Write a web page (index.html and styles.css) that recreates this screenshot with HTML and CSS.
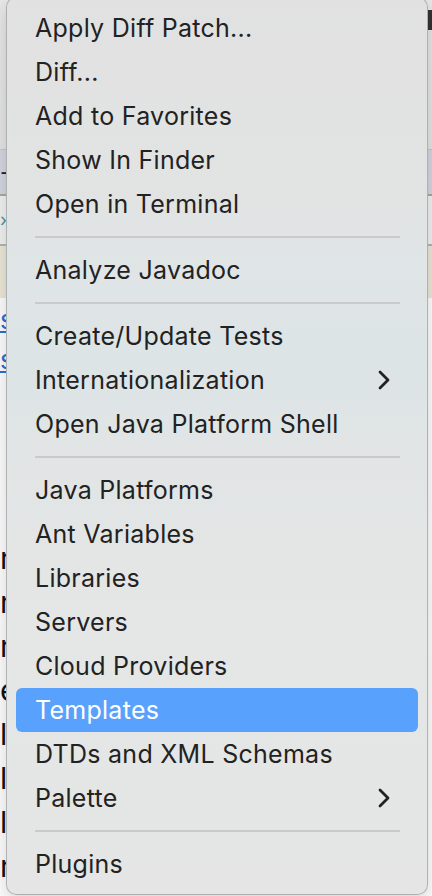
FILE: index.html
```html
<!DOCTYPE html>
<html lang="en">
<head>
<meta charset="utf-8">
<title>Context menu</title>
<link rel="stylesheet" href="styles.css">
</head>
<body>
<div class="backdrop">
  <div class="band band-top"><span class="tab-mark"></span></div>
  <div class="band band-dark"><span class="glyph">-</span></div>
  <div class="band band-light"><span class="teal">›</span></div>
  <div class="band band-beige"></div>
  <div class="band band-links">
    <div class="link">s</div>
    <div class="link">s</div>
  </div>
  <div class="band band-code">
    <div class="code">r</div>
    <div class="code">m</div>
    <div class="code">r</div>
    <div class="code">e</div>
    <div class="code">l</div>
    <div class="code">l</div>
    <div class="code">l</div>
    <div class="code">r</div>
  </div>
</div>

<div class="menu" role="menu">
  <div class="item">Apply Diff Patch...</div>
  <div class="item">Diff...</div>
  <div class="item">Add to Favorites</div>
  <div class="item">Show In Finder</div>
  <div class="item">Open in Terminal</div>
  <div class="sep"></div>
  <div class="item">Analyze Javadoc</div>
  <div class="sep"></div>
  <div class="item">Create/Update Tests</div>
  <div class="item">Internationalization
    <svg class="chev" viewBox="0 0 12 20" width="12" height="20"><path d="M2 2 L10 10 L2 18" fill="none" stroke="currentColor" stroke-width="2.8" stroke-linecap="round" stroke-linejoin="round"/></svg>
  </div>
  <div class="item">Open Java Platform Shell</div>
  <div class="sep"></div>
  <div class="item">Java Platforms</div>
  <div class="item">Ant Variables</div>
  <div class="item">Libraries</div>
  <div class="item">Servers</div>
  <div class="item">Cloud Providers</div>
  <div class="item active">Templates</div>
  <div class="item">DTDs and XML Schemas</div>
  <div class="item">Palette
    <svg class="chev" viewBox="0 0 12 20" width="12" height="20"><path d="M2 2 L10 10 L2 18" fill="none" stroke="currentColor" stroke-width="2.8" stroke-linecap="round" stroke-linejoin="round"/></svg>
  </div>
  <div class="sep"></div>
  <div class="item">Plugins</div>
</div>
</body>
</html>
```

FILE: styles.css
```css
html, body {
  margin: 0;
  padding: 0;
}
body {
  width: 432px;
  height: 896px;
  overflow: hidden;
  position: relative;
  background: #ffffff;
  font-family: Inter, "Noto Sans", sans-serif;
}

/* backdrop (window content behind the menu) */
.backdrop {
  display: flex;
  flex-direction: column;
  height: 896px;
  overflow: hidden;
}
.band {
  width: 100%;
  box-sizing: border-box;
  flex-shrink: 0;
}
.band-top {
  height: 150px;
  background: linear-gradient(#e9e9e9, #e6e6e6);
  border-bottom: 1px solid #c9c9c9;
  display: flex;
  justify-content: flex-end;
  align-items: flex-start;
}
.tab-mark {
  width: 4px;
  height: 20px;
  margin-top: 10px;
  background: #333333;
}
.band-dark {
  height: 46px;
  background: #d6d8e2;
  border-bottom: 2px solid #a8a8a8;
  display: flex;
  align-items: center;
}
.glyph {
  font-size: 22px;
  line-height: 1;
  color: #222;
}
.band-light {
  height: 50px;
  background: #f3f3f3;
  border-bottom: 2px solid #b5b5b5;
  display: flex;
  align-items: center;
}
.teal {
  font-size: 18px;
  color: #3d9aa8;
  line-height: 1;
}
.band-beige {
  height: 52px;
  background: #ede9d9;
}
.band-links {
  height: 82px;
  background: #ffffff;
  padding-top: 2px;
}
.link {
  font-size: 26px;
  line-height: 40px;
  color: #2a6fd6;
  text-decoration: underline;
}
.band-code {
  flex: 1 1 0;
  min-height: 0;
  overflow: hidden;
  background: #ffffff;
  padding-top: 156px;
}
.code {
  font-size: 30px;
  line-height: 44px;
  color: #111;
}

/* menu */
.menu {
  position: absolute;
  left: 6px;
  top: -3px;
  width: 422px;
  box-sizing: border-box;
  padding: 8px 0;
  border-radius: 10px;
  border: 1px solid rgba(0, 0, 0, 0.22);
  background: linear-gradient(180deg,
    #e1e1e1 0%,
    #e2e3e3 20%,
    #dfe5e7 33%,
    #dde4e6 42%,
    #e2e5e5 52%,
    #e5e6e6 70%,
    #e5e5e5 100%);
  box-shadow: 0 6px 20px rgba(0, 0, 0, 0.18);
  color: #222222;
}
.item {
  height: 44px;
  margin: 0 9px;
  padding: 0 28px 0 19px;
  display: flex;
  align-items: center;
  justify-content: space-between;
  font-size: 25px;
  letter-spacing: 0.27px;
  border-radius: 6px;
  white-space: nowrap;
}
.item.active {
  background: #58a1fd;
  color: #ffffff;
}
.chev {
  color: #222222;
}
.sep {
  height: 22px;
  display: flex;
  align-items: center;
  padding: 0 27px 0 28px;
}
.sep::before {
  content: "";
  flex: 1;
  height: 2px;
  background: #cacaca;
}
```
